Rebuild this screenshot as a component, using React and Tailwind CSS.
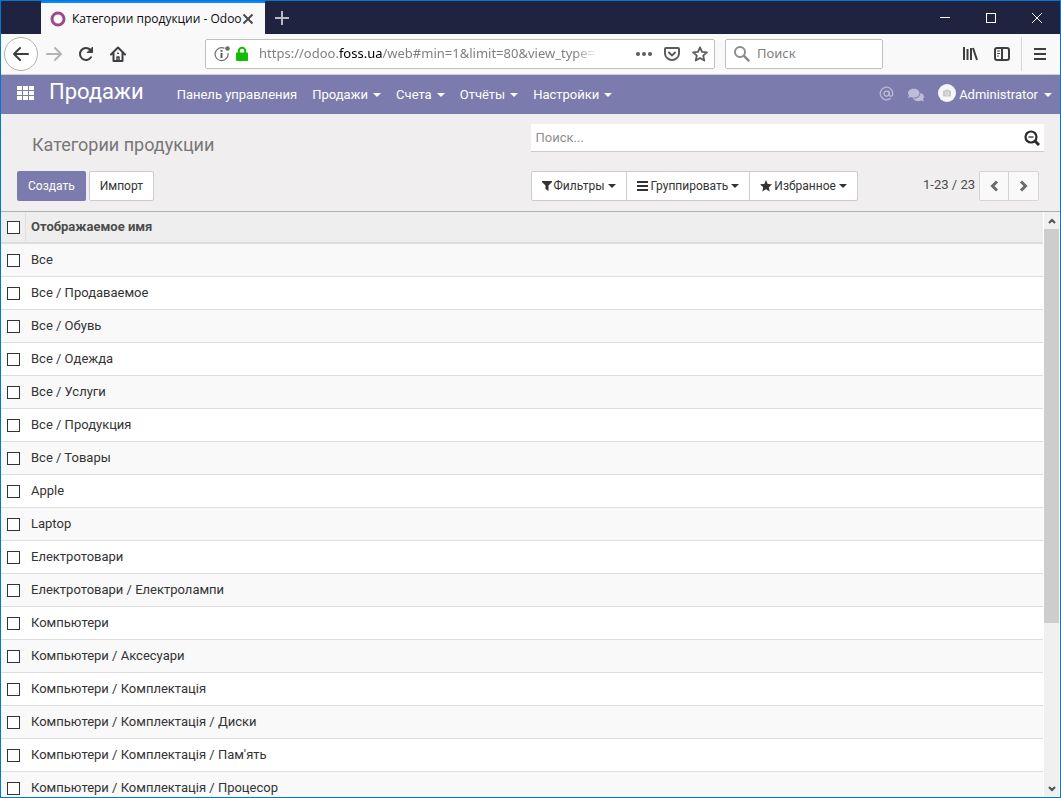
import React from "react";
import { AtSign } from "lucide-react";
import { FaCamera, FaComments } from "react-icons/fa";

const menuItems = [
  { title: "Панель управления", dropdown: false },
  { title: "Продажи", dropdown: true },
  { title: "Счета", dropdown: true },
  { title: "Отчёты", dropdown: true },
  { title: "Настройки", dropdown: true },
];

const searchMenus = [
  { title: "Фильтры", icon: FilterIcon },
  { title: "Группировать", icon: BarsIcon },
  { title: "Избранное", icon: StarIcon },
];

const categories = [
  "Все",
  "Все / Продаваемое",
  "Все / Обувь",
  "Все / Одежда",
  "Все / Услуги",
  "Все / Продукция",
  "Все / Товары",
  "Apple",
  "Laptop",
  "Електротовари",
  "Електротовари / Електролампи",
  "Компьютери",
  "Компьютери / Аксесуари",
  "Компьютери / Комплектація",
  "Компьютери / Комплектація / Диски",
  "Компьютери / Комплектація / Пам'ять",
  "Компьютери / Комплектація / Процесор",
];

function Caret() {
  return (
    <svg className="w-2 h-1 shrink-0" viewBox="0 0 8 4" fill="currentColor" aria-hidden="true">
      <path d="M0 0h8L4 4z" />
    </svg>
  );
}

function FilterIcon() {
  return (
    <svg className="w-[10px] h-3 mr-[2px]" viewBox="0 0 10 12" fill="currentColor" aria-hidden="true">
      <path d="M0 1h10v1L6.500 5.500V11L3.500 9V5.500L0 2z" />
    </svg>
  );
}

function BarsIcon() {
  return (
    <svg className="w-[11px] h-3 mr-[3px]" viewBox="0 0 11 12" fill="currentColor" aria-hidden="true">
      <path d="M0 1h11v2H0zM0 5h11v2H0zM0 9h11v2H0z" />
    </svg>
  );
}

function StarIcon() {
  return (
    <svg className="w-3 h-3 mr-[2px]" viewBox="0 0 12 12" fill="currentColor" aria-hidden="true">
      <path d="M6 0l1.700 3.900 4.300.4-3.200 2.900.9 4.300L6 9.300l-3.700 2.200.9-4.300L0 4.300l4.300-.4z" />
    </svg>
  );
}

function Stroke({ size = 16, width = 2, cap = "round", children }) {
  return (
    <svg
      width={size}
      height={size}
      viewBox={`0 0 ${size} ${size}`}
      fill="none"
      stroke="currentColor"
      strokeWidth={width}
      strokeLinecap={cap}
      strokeLinejoin={cap === "round" ? "round" : "miter"}
      aria-hidden="true"
    >
      {children}
    </svg>
  );
}

function IconButton({ label, className = "w-8 h-8", children }) {
  return (
    <button type="button" aria-label={label} className={`flex items-center justify-center shrink-0 ${className}`}>
      {children}
    </button>
  );
}

function TabStrip() {
  return (
    <div className="flex h-[33px] shrink-0 bg-[#202340] pl-10">
      <div className="flex items-center w-56 bg-[#f9f9fa] border-t-2 border-[#0a84ff] pl-2 pr-[11px]">
        <svg className="w-[18px] h-[18px] shrink-0" viewBox="0 0 18 18" aria-hidden="true">
          <circle cx="9" cy="9" r="6" fill="#fff" stroke="#a24689" strokeWidth="3" />
        </svg>
        <span className="flex-1 pl-[5px] font-['Open_Sans',sans-serif] text-xs text-[#0c0c0d] whitespace-nowrap">
          Категории продукции - Odoo
        </span>
        <IconButton label="Закрыть вкладку" className="w-3 h-5 text-[#4a4a4c]">
          <Stroke size={12} width={2} cap="butt">
            <path d="M1.500 1.500l9 9M10.500 1.500l-9 9" />
          </Stroke>
        </IconButton>
      </div>
      <IconButton label="Новая вкладка" className="w-[34px] text-[#b9bac6]">
        <Stroke size={16} width={2} cap="butt">
          <path d="M8 1v14M1 8h14" />
        </Stroke>
      </IconButton>
      <div className="flex ml-auto text-white">
        <IconButton label="Свернуть" className="w-[46px]">
          <svg width="10" height="10" shapeRendering="crispEdges" aria-hidden="true">
            <path d="M0 4.500h10" stroke="currentColor" />
          </svg>
        </IconButton>
        <IconButton label="Развернуть" className="w-[46px]">
          <svg width="10" height="10" fill="none" shapeRendering="crispEdges" aria-hidden="true">
            <path d="M.5 .5h9v9h-9z" stroke="currentColor" />
          </svg>
        </IconButton>
        <IconButton label="Закрыть" className="w-[46px]">
          <svg width="10" height="10" fill="none" aria-hidden="true">
            <path d="M0 0l10 10M10 0L0 10" stroke="currentColor" />
          </svg>
        </IconButton>
      </div>
    </div>
  );
}

function Toolbar() {
  return (
    <div className="flex items-center h-[41px] shrink-0 bg-[#f9f9fa] border-b border-[#cfcfd1] pl-[3px] pr-1 text-[#3e3e40]">
      <IconButton label="Назад" className="w-[34px] h-[34px] rounded-full border border-[#b1b1b3] bg-white">
        <Stroke>
          <path d="M15 8H1M7 2L1 8l6 6" />
        </Stroke>
      </IconButton>
      <IconButton label="Вперёд" className="w-8 h-8 text-[#b3b3b4]">
        <Stroke>
          <path d="M1 8h14M9 2l6 6-6 6" />
        </Stroke>
      </IconButton>
      <IconButton label="Обновить">
        <Stroke>
          <path d="M13 11.300a6 6 0 1 1-.7-7.500" />
          <path d="M14.500 1.500v5h-5z" fill="currentColor" strokeWidth="1" />
        </Stroke>
      </IconButton>
      <IconButton label="Домашняя страница">
        <Stroke>
          <path d="M1 8.500L8 1.500l7 7M3.500 7.500V15h9V7.500" />
          <path d="M7 11h2v4H7zM7.700 7.300h.6" strokeWidth="1.500" />
        </Stroke>
      </IconButton>

      <div className="flex items-center flex-1 min-w-0 h-[30px] ml-[71px] pl-2 bg-white border border-[#bfbfc1] rounded-xs text-[#5c5c5e]">
        <svg className="w-4 h-4 shrink-0" viewBox="0 0 16 16" fill="none" aria-hidden="true">
          <path d="M10.500 2.300A6.500 6.500 0 1 0 14 7" stroke="#6b6b6d" strokeWidth="1.200" />
          <circle cx="13.500" cy="2.500" r="2.300" fill="#6b6b6d" />
          <path d="M7.500 4v1.800M7.500 7v5" stroke="#5c5c5e" strokeWidth="2" />
        </svg>
        <svg className="w-4 h-4 ml-1 shrink-0" viewBox="0 0 16 16" fill="none" aria-hidden="true">
          <rect x="2" y="6.500" width="12" height="8.500" rx="1" fill="#12bc00" />
          <path d="M4.800 8V5a3.200 3.200 0 0 1 6.400 0v3" stroke="#12bc00" strokeWidth="2" />
        </svg>
        <div className="flex-1 min-w-0 ml-[9px] mr-6 whitespace-nowrap text-[13px] text-[#7f7f80] [mask-image:linear-gradient(to_left,transparent_8px,black_32px)]">
          https://odoo.<span className="text-black">foss.ua</span>/web#min=1&amp;limit=80&amp;view_type=
        </div>
        <IconButton label="Действия на странице" className="w-7 h-7">
          <svg width="16" height="16" fill="currentColor" aria-hidden="true">
            <circle cx="2" cy="8" r="2" />
            <circle cx="8" cy="8" r="2" />
            <circle cx="14" cy="8" r="2" />
          </svg>
        </IconButton>
        <IconButton label="Сохранить в Pocket" className="w-7 h-7">
          <Stroke>
            <path d="M2 2h12a1 1 0 0 1 1 1v4.500a7 6.500 0 0 1-14 0V3a1 1 0 0 1 1-1z" />
            <path d="M5 6.500l3 3 3-3" />
          </Stroke>
        </IconButton>
        <IconButton label="Добавить в закладки" className="w-7 h-7">
          <Stroke>
            <path d="M8 1.300l2 4.500 4.900.5-3.700 3.300 1.100 5L8 12l-4.300 2.600 1.100-5L1.100 6.300 6 5.800z" strokeWidth="1.800" />
          </Stroke>
        </IconButton>
      </div>

      <label className="flex items-center w-[158px] h-[30px] ml-[10px] pl-2 bg-white border border-[#bfbfc1] rounded-xs">
        <svg className="w-4 h-4 shrink-0 text-[#8c8c8d]" viewBox="0 0 16 16" fill="none" stroke="currentColor" aria-hidden="true">
          <circle cx="6" cy="6" r="5" strokeWidth="2" />
          <path d="M9.700 9.700l5.500 5.500" strokeWidth="2.500" />
        </svg>
        <input
          type="text"
          aria-label="Поиск в интернете"
          placeholder="Поиск"
          className="flex-1 min-w-0 pl-[7px] text-[13px] outline-none placeholder:text-[#7f7f80]"
        />
      </label>

      <IconButton label="Библиотека" className="w-8 h-8 ml-[71px]">
        <svg width="16" height="16" fill="none" stroke="currentColor" strokeWidth="2" aria-hidden="true">
          <path d="M2 1v13M5.500 3v11M9 2v12M11 2l4 12" />
        </svg>
      </IconButton>
      <IconButton label="Боковая панель">
        <Stroke>
          <rect x="1" y="2" width="14" height="12" rx="2" />
          <path d="M8 2v12" />
          <path d="M3.500 5h2M3.500 7.500h2M3.500 10h1" strokeWidth="1" />
        </Stroke>
      </IconButton>
      <div className="w-px h-[34px] ml-[3px] mr-[2px] bg-[#d7d7db]" />
      <IconButton label="Меню">
        <svg width="12" height="12" stroke="currentColor" strokeWidth="2" aria-hidden="true">
          <path d="M0 1h12M0 6h12M0 11h12" />
        </svg>
      </IconButton>
    </div>
  );
}

function Navbar() {
  return (
    <header className="flex items-center h-[39px] shrink-0 bg-[#7c7bad] text-white text-[13px] pl-4 pr-2">
      <IconButton label="Приложения" className="h-full pb-[3px]">
        <svg width="18" height="14" fill="currentColor" aria-hidden="true">
          <path d="M0 0h5v4H0zM6 0h5v4H6zM12 0h5v4h-5zM0 5h5v4H0zM6 5h5v4H6zM12 5h5v4h-5zM0 10h5v4H0zM6 10h5v4H6zM12 10h5v4h-5z" />
        </svg>
      </IconButton>
      <a href="#sales" className="ml-[14px] pb-[6px] text-[22px] leading-7">Продажи</a>
      <nav className="flex ml-[33px] gap-[15px]">
        {menuItems.map((item) => (
          <a key={item.title} href="#menu" className="flex items-center gap-[5px] whitespace-nowrap">
            {item.title}
            {item.dropdown && <Caret />}
          </a>
        ))}
      </nav>
      <div className="flex items-center ml-auto">
        <IconButton label="Упоминания" className="w-4 h-8 pb-[2px] text-[#bdbdd6]">
          <AtSign size={15} strokeWidth={2} />
        </IconButton>
        <IconButton label="Сообщения" className="w-4 h-8 ml-[14px] text-[#bdbdd6]">
          <FaComments className="w-4 h-4" />
        </IconButton>
        <button type="button" className="flex items-center ml-[14px]">
          <span className="flex items-center justify-center w-[18px] h-[18px] mb-1 rounded-full bg-[#f6f6f6]">
            <FaCamera className="w-2 h-2 text-[#c9c9c9]" />
          </span>
          <span className="ml-[3px] mr-[6px]">Administrator</span>
          <Caret />
        </button>
      </div>
    </header>
  );
}

function ControlPanel() {
  return (
    <div className="grid grid-cols-2 shrink-0 gap-y-[19px] bg-[#f0eeee] border-b border-[#afafb6] pl-4 pt-[10px] pb-[10px]">
      <h1 className="self-end pl-[15px] text-lg leading-5 text-[#777777] -mb-[3px]">Категории продукции</h1>
      <div className="flex items-center h-7 mr-4 -ml-2 pl-[5px] pr-1 bg-white border-b border-[#ccc]">
        <input
          type="text"
          aria-label="Поиск категорий"
          placeholder="Поиск..."
          className="flex-1 min-w-0 text-[13px] outline-none placeholder:text-[#8f8f8f]"
        />
        <IconButton label="Расширенный поиск" className="w-4 h-6 text-[#2a2a2a]">
          <Stroke cap="butt">
            <circle cx="7" cy="7" r="5.500" strokeWidth="2.200" />
            <path d="M4.500 7h5" strokeWidth="1.300" />
            <path d="M11 11l4 4" strokeWidth="3" />
          </Stroke>
        </IconButton>
      </div>

      <div className="flex gap-[3px] text-xs">
        <button type="button" className="h-[30px] px-[11px] rounded-xs bg-[#7c7bad] text-white">Создать</button>
        <button type="button" className="h-[30px] px-[10px] rounded-xs border border-[#ccc] bg-white text-[#333]">
          Импорт
        </button>
      </div>
      <div className="flex items-center justify-between -ml-2 pr-[21px]">
        <div className="flex h-[30px] rounded-xs border border-[#ccc] bg-white text-xs text-[#333] divide-x divide-[#ccc]">
          {searchMenus.map((menu) => (
            <button key={menu.title} type="button" className="flex items-center px-[10px]">
              <menu.icon />
              {menu.title}
              <span className="ml-[3px]">
                <Caret />
              </span>
            </button>
          ))}
        </div>
        <div className="flex items-center">
          <span className="text-[13px] leading-5 text-[#4c4c4c] pb-[2px]">1-23 / 23</span>
          <div className="flex h-[30px] ml-1 rounded-xs border border-[#d5d5d5] bg-[#f9f9f9] divide-x divide-[#d5d5d5] text-[#6b6b6b]">
            <IconButton label="Предыдущая" className="w-[29px]">
              <Stroke size={12} width={3} cap="butt">
                <path d="M9 1.500L4.500 6 9 10.500" />
              </Stroke>
            </IconButton>
            <IconButton label="Следующая" className="w-[29px]">
              <Stroke size={12} width={3} cap="butt">
                <path d="M3 1.500L7.500 6 3 10.500" />
              </Stroke>
            </IconButton>
          </div>
        </div>
      </div>
    </div>
  );
}

function Checkbox({ label }) {
  return (
    <input
      type="checkbox"
      aria-label={label}
      className="block w-[13px] h-[13px] appearance-none border border-[#333] bg-white checked:bg-[#7c7bad]"
    />
  );
}

function CategoryList() {
  return (
    <div className="flex flex-1 min-h-0 bg-white">
      <div className="flex-1 overflow-hidden">
        <table className="w-full border-separate border-spacing-0 text-left text-[13px] leading-5 text-[#333]">
          <thead>
            <tr className="h-8 bg-[#eeeeee] text-[#4c4c4c]">
              <th className="w-[25px] pl-[6px] border-b-2 border-r border-[#dfdfdf] border-b-[#dddddd]">
                <Checkbox label="Выбрать все" />
              </th>
              <th className="pl-[5px] font-bold border-b-2 border-[#dddddd]">Отображаемое имя</th>
            </tr>
          </thead>
          <tbody>
            {categories.map((name) => (
              <tr key={name} className="h-[33px] odd:bg-[#f9f9f9]">
                <td className="pl-[6px] border-b border-[#dddddd]">
                  <Checkbox label={name} />
                </td>
                <td className="pl-[5px] border-b border-[#dddddd]">{name}</td>
              </tr>
            ))}
          </tbody>
        </table>
      </div>
      <div className="flex flex-col items-center w-[15px] ml-px mr-px bg-[#f0f0f0] text-[#505050]">
        <IconButton label="Вверх" className="w-full h-[17px]">
          <Stroke size={8} cap="butt">
            <path d="M1 6l3-3 3 3" />
          </Stroke>
        </IconButton>
        <div className="flex flex-col flex-1 w-full">
          <div className="h-5/7 bg-[#cdcdcd]" />
        </div>
        <IconButton label="Вниз" className="w-full h-[17px]">
          <Stroke size={8} cap="butt">
            <path d="M1 2l3 3 3-3" />
          </Stroke>
        </IconButton>
      </div>
    </div>
  );
}

export default function App() {
  return (
    <div className="flex flex-col h-screen border border-[#0078d7] overflow-hidden">
      <div className="shrink-0 font-['Noto_Sans',sans-serif]">
        <TabStrip />
        <Toolbar />
      </div>
      <div className="flex flex-col flex-1 min-h-0 font-[Roboto,sans-serif]">
        <Navbar />
        <ControlPanel />
        <CategoryList />
      </div>
    </div>
  );
}
